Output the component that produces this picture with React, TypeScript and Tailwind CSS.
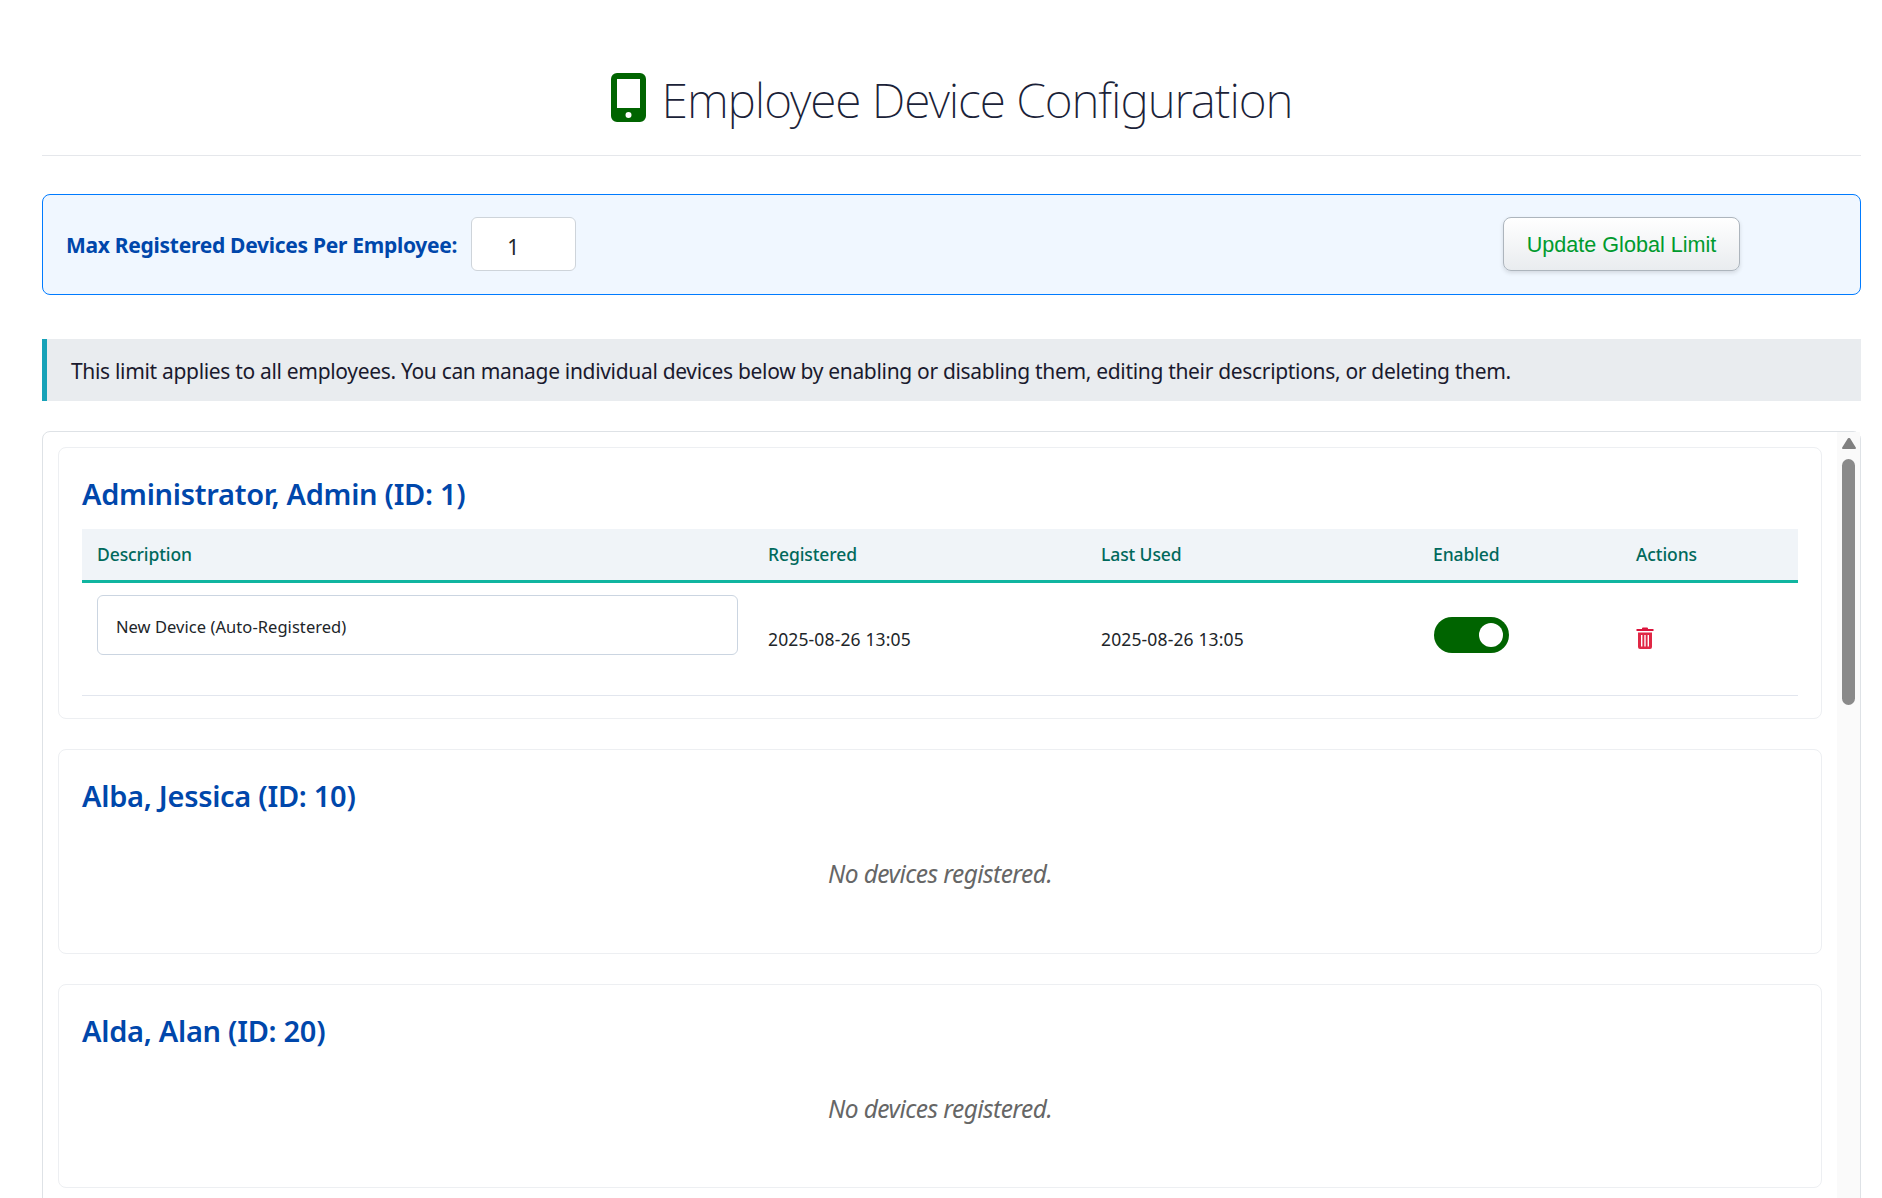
const font = "[font-family:'Noto_Sans','Open_Sans',sans-serif]";

function PhoneIcon() {
  return (
    <svg width="35" height="49" viewBox="0 0 35 49" className="shrink-0">
      <path
        fillRule="evenodd"
        fill="#006400"
        d="M6 0H29A6 6 0 0 1 35 6V43A6 6 0 0 1 29 49H6A6 6 0 0 1 0 43V6A6 6 0 0 1 6 0ZM6 6V35H29V6ZM17.5 39A3 3 0 1 0 17.5 45A3 3 0 1 0 17.5 39Z"
      />
    </svg>
  );
}

function TrashIcon() {
  return (
    <svg width="18" height="22" viewBox="0 0 18 22" className="block">
      <path d="M6 2V1.5A1 1 0 0 1 7 .5H11A1 1 0 0 1 12 1.5V2H17.5V4H.5V2Z" fill="#dc143c" />
      <path
        fillRule="evenodd"
        fill="#e02845"
        d="M2 5.5H16V20A2 2 0 0 1 14 22H4A2 2 0 0 1 2 20ZM5 8V19.5H6.4V8ZM8.3 8V19.5H9.7V8ZM11.6 8V19.5H13V8Z"
      />
    </svg>
  );
}

function Card({ name, className, children }: { name: string; className: string; children: React.ReactNode }) {
  return (
    <section className={`rounded-lg border border-[#edeff2] bg-white px-[23px] ${className}`}>
      <h2 className="pt-[25px] text-[29px] font-semibold leading-[42px] tracking-[-0.28px] text-[#0047ab]">{name}</h2>
      {children}
    </section>
  );
}

function Empty() {
  return (
    <p className="pt-[39px] text-center text-[24.5px] italic leading-[36px] tracking-[-0.55px] text-[#666666]">
      No devices registered.
    </p>
  );
}

export default function App() {
  const head = "px-[15px] text-left text-[17.5px] font-medium tracking-[-0.1px] text-[#00695c]";
  const date = "px-[15px] pt-[2px] align-middle text-[17.5px] tracking-[0.14px] text-[#212529]";
  return (
    <div className={`h-screen overflow-hidden bg-white pl-[42px] pr-[21px] text-[#212529] ${font}`}>
      <header className="flex h-[156px] items-center justify-center gap-[16px] border-b border-[#e5e7eb] pt-[58px] pb-[20px]">
        <div className="mt-[2px]"><PhoneIcon /></div>
        <h1 className="pt-[6px] text-[48px] font-extralight leading-[56px] tracking-[-1.09px] text-[#1a2238]">Employee Device Configuration</h1>
      </header>

      <div className="mt-[38px] flex h-[101px] items-center rounded-lg border border-[#007bff] bg-[#f0f7ff] pl-[23px] pr-[120px]">
        <label className="pt-[2px] text-[21px] font-bold tracking-[-0.28px] text-[#0047ab]">Max Registered Devices Per Employee:</label>
        <div className="mb-[1px] ml-[14px] flex h-[54px] w-[105px] items-center rounded-md border border-[#ced4da] bg-white pl-[35px] pt-[7px] text-[21px] text-[#212529]">1</div>
        <button className="mb-[1px] ml-auto h-[54px] w-[237px] rounded-lg border border-[#adb5bd] bg-gradient-to-b from-white to-[#e9ecef] pt-[2px] text-[21.6px] text-[#009a2e] shadow-[0_2px_4px_rgba(0,0,0,0.12)] [font-family:'Liberation_Sans',sans-serif]">
          Update Global Limit
        </button>
      </div>

      <p className="mt-[44px] flex h-[62px] items-center border-l-[5px] border-[#17a2b8] bg-[#e9ecef] pl-[24px] pt-[3px] text-[21px] tracking-[-0.32px] text-[#1a1a2e]">
        This limit applies to all employees. You can manage individual devices below by enabling or disabling them, editing their descriptions, or deleting them.
      </p>

      <div className="mt-[30px] flex h-[900px] rounded-lg border border-[#dee2e6] bg-white">
        <div className="flex w-[1779px] shrink-0 flex-col gap-[30px] pl-[15px] pt-[15px]">
          <Card name="Administrator, Admin (ID: 1)" className="h-[272px]">
            <table className="mt-[14px] w-[1716px] table-fixed border-collapse">
              <thead>
                <tr className="h-[52px] border-b-[3px] border-[#10b5a0] bg-[#f0f4f8]">
                  <th className={`${head} w-[671px]`}>Description</th>
                  <th className={`${head} w-[333px]`}>Registered</th>
                  <th className={`${head} w-[332px]`}>Last Used</th>
                  <th className={`${head} w-[203px]`}>Enabled</th>
                  <th className={`${head} w-[177px]`}>Actions</th>
                </tr>
              </thead>
              <tbody>
                <tr className="h-[114px] border-b border-[#e2e6ee]">
                  <td className="px-[15px] pt-[12px] align-top">
                    <div className="flex h-[60px] items-center rounded-md border border-[#cbd5e1] pl-[18px] pt-[5px] text-[16.5px] tracking-[0.05px] text-[#212529]">
                      New Device (Auto-Registered)
                    </div>
                  </td>
                  <td className={date}>2025-08-26 13:05</td>
                  <td className={date}>2025-08-26 13:05</td>
                  <td className="pb-[8px] pl-[16px] align-middle">
                    <div className="flex h-[36px] w-[75px] items-center justify-end rounded-full bg-[#006400] pr-[6px]">
                      <span className="h-[24px] w-[24px] rounded-full bg-white" />
                    </div>
                  </td>
                  <td className="px-[15px] pb-[2px] align-middle">
                    <TrashIcon />
                  </td>
                </tr>
              </tbody>
            </table>
          </Card>
          <Card name="Alba, Jessica (ID: 10)" className="h-[205px]"><Empty /></Card>
          <Card name="Alda, Alan (ID: 20)" className="h-[204px]"><Empty /></Card>
        </div>
        <div className="ml-[15px] flex w-[23px] shrink-0 flex-col items-center bg-[#fafafa] pt-[6px]">
          <svg width="14" height="11" viewBox="0 0 14 11" className="mb-[10px]"><path d="M5.8 .6 A1.4 1.4 0 0 1 8.2 .6 L13.8 9.6 A1 1 0 0 1 13 11 H1 A1 1 0 0 1 .2 9.6 Z" fill="#808080" /></svg>
          <div className="h-[246px] w-[13px] rounded-full bg-[#8a8a8a]" />
        </div>
      </div>
    </div>
  );
}
